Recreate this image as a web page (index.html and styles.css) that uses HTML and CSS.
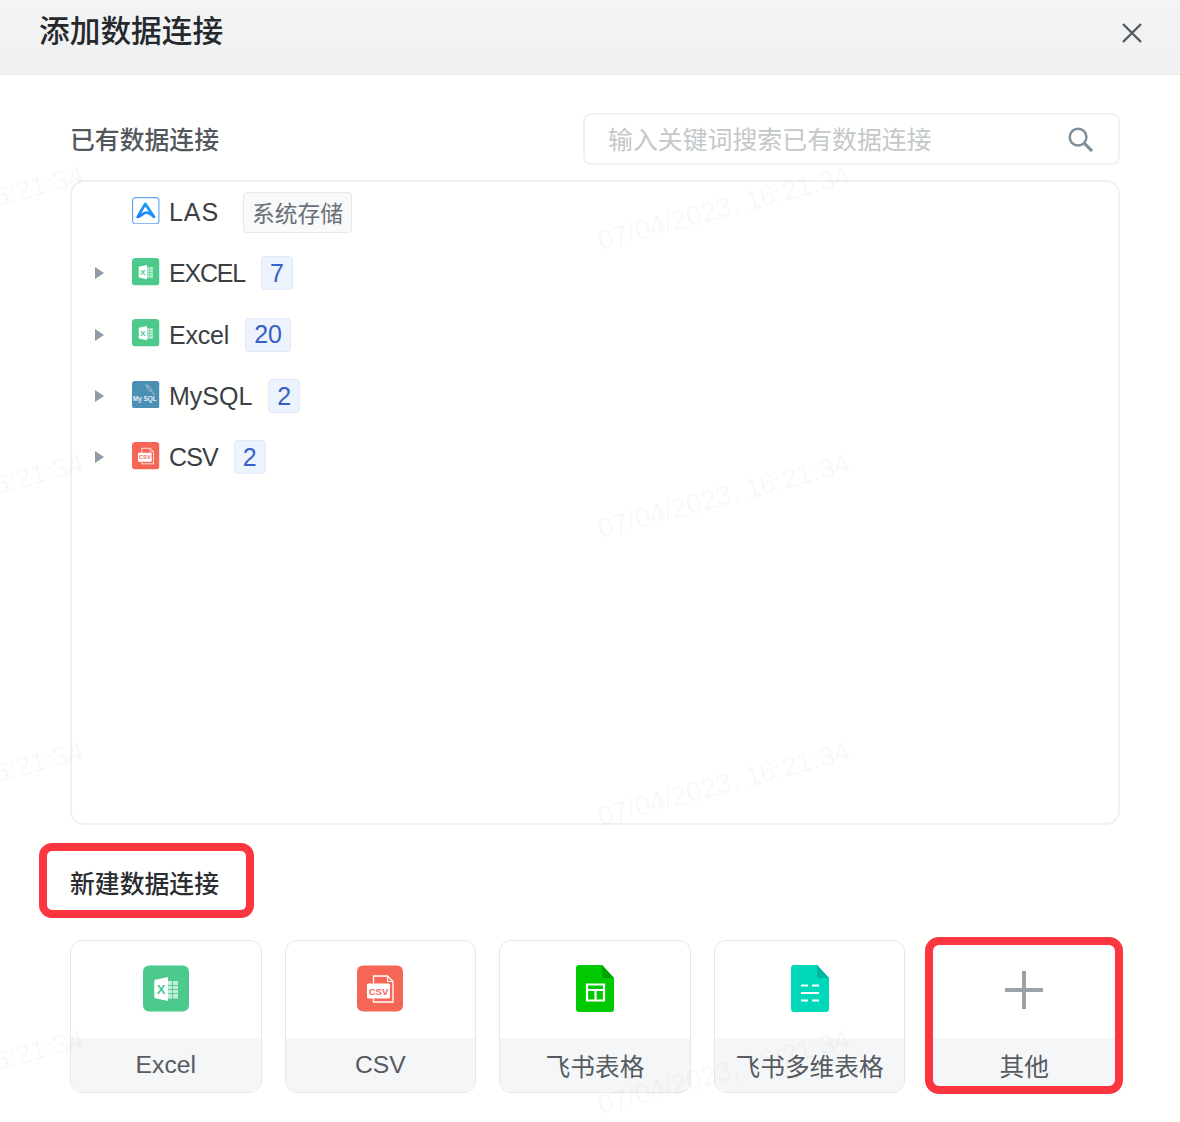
FILE: index.html
```html
<!DOCTYPE html>
<html lang="zh-CN">
<head>
<meta charset="utf-8">
<title>添加数据连接</title>
<link rel="stylesheet" href="styles.css">
</head>
<body>
<svg class="defs" width="0" height="0" aria-hidden="true">
  <defs>
    <linearGradient id="las-grad" x1="0" y1="1" x2="1" y2="0">
      <stop offset="0" stop-color="#1f7cf5"/>
      <stop offset="1" stop-color="#19a4f7"/>
    </linearGradient>
    <symbol id="i-excel" viewBox="0 0 46 46">
      <rect width="46" height="46" rx="6" fill="#4bca8c"/>
      <path d="M25 15.500h10v17.500h-10z" fill="#c2eed8"/>
      <path d="M25 20h10M25 24h10M25 28h10M29.500 15.500v17.500" stroke="#4bca8c" stroke-width=".9"/>
      <path d="M11.300 14.500 25 11.500v24l-13.700-3z" fill="#fff"/>
      <text x="18.200" y="28" class="i-x">X</text>
    </symbol>
    <symbol id="i-csv" viewBox="0 0 46 46">
      <rect width="46" height="46" rx="6" fill="#f66657"/>
      <path d="M16.500 18v-7.500h14l5.500 5.500v20.500h-19.500v-3.500" fill="none" stroke="#fff" stroke-width="1.300"/>
      <path d="M30.500 10.500v5.500h5.500" fill="none" stroke="#fff" stroke-width="1.100"/>
      <rect x="10" y="18" width="23" height="15" rx="1.500" fill="#fff"/>
      <text x="21.500" y="29" class="i-csv-t">CSV</text>
    </symbol>
    <symbol id="i-mysql" viewBox="0 0 28 28">
      <rect width="28" height="28" rx="3" fill="#4b8fb5"/>
      <path d="M14 4c3 .5 5 3 6 6l2.500 4M15 4.500c.5 3 2 5 3.500 6.500" fill="none" stroke="#d4e5ef" stroke-width=".7"/>
      <text x="13" y="20.500" class="i-my">My SQL</text>
    </symbol>
    <symbol id="i-sheet" viewBox="0 0 38 47">
      <path d="M3 0h23l12 13v31a3 3 0 0 1-3 3H3a3 3 0 0 1-3-3V3a3 3 0 0 1 3-3z" fill="#00c900"/>
      <path d="M26 0l12 13h-9a3 3 0 0 1-3-3z" fill="#00a300"/>
      <path d="M11 19.500h17v16h-17zM11 25h17M19.500 25v10.500" fill="none" stroke="#fff" stroke-width="2.200"/>
    </symbol>
    <symbol id="i-base" viewBox="0 0 38 47">
      <path d="M3 0h23l12 13v31a3 3 0 0 1-3 3H3a3 3 0 0 1-3-3V3a3 3 0 0 1 3-3z" fill="#00d8ba"/>
      <path d="M26 0l12 13h-9a3 3 0 0 1-3-3z" fill="#00b59c"/>
      <path d="M10 20.500h7M21 20.500h7M10 28h18M10 35.500h7M21 35.500h7" fill="none" stroke="#fff" stroke-width="2"/>
    </symbol>
  </defs>
</svg>

<header class="head">
  <h1 class="head-title">添加数据连接</h1>
  <button class="head-close" type="button" aria-label="关闭">
    <svg viewBox="0 0 20 20" width="20" height="20"><path d="M1 1l18 18M19 1 1 19" fill="none" stroke="#56595d" stroke-width="2.400"/></svg>
  </button>
</header>

<main class="body">
  <div class="bar">
    <h2 class="sec-title">已有数据连接</h2>
    <label class="search">
      <input class="search-input" type="text" placeholder="输入关键词搜索已有数据连接">
      <svg class="search-icon" viewBox="0 0 26 26" width="25" height="25"><circle cx="10.500" cy="10.500" r="8.700" fill="none" stroke="#7d8f9b" stroke-width="2.600"/><path d="M17 17l8 8" stroke="#7d8f9b" stroke-width="3.200"/></svg>
    </label>
  </div>

  <ul class="tree">
    <li class="row">
      <span class="caret-slot"></span>
      <svg class="row-icon" viewBox="0 0 28 28"><rect x=".6" y=".6" width="26.800" height="26.800" rx="3" fill="#fff" stroke="#67a5f8" stroke-width="1.200"/><path d="M5.800 20.200 13.500 7l9 13.300c-3-2.800-6-5-9-4.300-2.500.8-4.500 4-7.700 4.200z" fill="none" stroke="url(#las-grad)" stroke-width="2.800" stroke-linejoin="round"/></svg>
      <span class="row-name name-wide">LAS</span>
      <span class="tag tag-sys">系统存储</span>
    </li>
    <li class="row">
      <span class="caret-slot"><i class="caret"></i></span>
      <svg class="row-icon"><use href="#i-excel"/></svg>
      <span class="row-name name-tight">EXCEL</span>
      <span class="tag">7</span>
    </li>
    <li class="row">
      <span class="caret-slot"><i class="caret"></i></span>
      <svg class="row-icon"><use href="#i-excel"/></svg>
      <span class="row-name name-fine">Excel</span>
      <span class="tag">20</span>
    </li>
    <li class="row">
      <span class="caret-slot"><i class="caret"></i></span>
      <svg class="row-icon"><use href="#i-mysql"/></svg>
      <span class="row-name">MySQL</span>
      <span class="tag">2</span>
    </li>
    <li class="row">
      <span class="caret-slot"><i class="caret"></i></span>
      <svg class="row-icon"><use href="#i-csv"/></svg>
      <span class="row-name name-snug">CSV</span>
      <span class="tag">2</span>
    </li>
  </ul>

  <h2 class="sec-title sec-new">新建数据连接<span class="mark mark-title"></span></h2>

  <div class="cards">
    <div class="card">
      <div class="card-top"><svg class="card-icon-square"><use href="#i-excel"/></svg></div>
      <div class="card-foot">Excel</div>
    </div>
    <div class="card">
      <div class="card-top"><svg class="card-icon-square"><use href="#i-csv"/></svg></div>
      <div class="card-foot">CSV</div>
    </div>
    <div class="card">
      <div class="card-top"><svg class="card-icon-doc"><use href="#i-sheet"/></svg></div>
      <div class="card-foot">飞书表格</div>
    </div>
    <div class="card">
      <div class="card-top"><svg class="card-icon-doc"><use href="#i-base"/></svg></div>
      <div class="card-foot">飞书多维表格</div>
    </div>
    <div class="card card-other">
      <div class="card-top"><svg class="card-plus" viewBox="0 0 38 38"><path d="M19 0v38M0 19h38" fill="none" stroke="#98a3ab" stroke-width="4"/></svg></div>
      <div class="card-foot">其他</div>
      <span class="mark mark-card"></span>
    </div>
  </div>
</main>

<div class="wm-layer" aria-hidden="true">
  <span class="wm">07/04/2023, 16:21:34</span><span class="wm">07/04/2023, 16:21:34</span>
  <span class="wm">07/04/2023, 16:21:34</span><span class="wm">07/04/2023, 16:21:34</span>
  <span class="wm">07/04/2023, 16:21:34</span><span class="wm">07/04/2023, 16:21:34</span>
  <span class="wm">07/04/2023, 16:21:34</span><span class="wm">07/04/2023, 16:21:34</span>
</div>
</body>
</html>
```

FILE: styles.css
```css
* { box-sizing: border-box; }
html, body { height: 1122px; margin: 0; overflow: hidden; }
body {
  position: relative;
  background: #fffffe;
  color: #1f2329;
  font-family: "Liberation Sans", "Noto Sans CJK SC", sans-serif;
}
.defs { position: absolute; }

.head {
  height: 75px;
  display: flex;
  align-items: center;
  justify-content: space-between;
  padding: 0 38px 10px 39px;
  background: linear-gradient(#f3f4f4, #eff0f2);
  border-bottom: 1px solid #e8e9eb;
}
.head-title { margin: 0; font-size: 30.700px; font-weight: 500; line-height: 44px; color: #25282c; }
.head-close { width: 20px; height: 20px; padding: 0; border: 0; background: none; display: block; margin-top: 2px; }
.head-close svg { display: block; }

.body { padding: 38px 60px 0 70px; }
.bar { display: flex; align-items: center; justify-content: space-between; height: 52px; }
.sec-title { margin: 0; padding-top: 4px; font-size: 24.850px; font-weight: 500; line-height: 36px; color: #53585e; }

.search {
  width: 537px;
  height: 52px;
  display: flex;
  align-items: center;
  padding: 0 25px 0 23px;
  border: 2px solid #f0f1f2;
  border-radius: 8px;
}
.search-input {
  flex: 1;
  min-width: 0;
  border: 0;
  outline: 0;
  padding: 3px 0 0;
  background: none;
  font: inherit;
  font-size: 24.900px;
}
.search-input::placeholder { color: #c4c8cb; opacity: 1; }
.search-icon { flex: none; }

.tree {
  list-style: none;
  margin: 15px 0 0;
  padding: 0;
  height: 645px;
  border: 2px solid #f0f1f2;
  border-radius: 14px;
}
.row { display: flex; align-items: center; height: 61.300px; padding-bottom: 1px; font-size: 25px; color: #3b3f44; }
.caret-slot { flex: none; width: 60px; padding-left: 23px; display: flex; align-items: center; }
.caret {
  display: block;
  width: 0;
  height: 0;
  border-style: solid;
  border-width: 6px 0 6px 9px;
  border-color: transparent transparent transparent #8f9ba6;
}
.row-icon { flex: none; width: 27.500px; height: 27.500px; margin: 0 9.500px 3px 0; }
.row-name { line-height: 36px; }
.name-tight { letter-spacing: -1.200px; }
.name-snug { letter-spacing: -.9px; }
.name-fine { letter-spacing: -.2px; }
.name-wide { letter-spacing: .9px; }
.tag {
  margin-left: 16px;
  height: 34px;
  padding: 0 8px;
  display: flex;
  align-items: center;
  border: 1px solid #e1e9fa;
  border-radius: 4px;
  background: #edf3fd;
  color: #3760c6;
}
.tag-sys {
  margin-left: 24px;
  height: 41px;
  font-size: 22.800px;
  border-color: #e6e8ea;
  background: #f8f9fa;
  color: #6b7077;
}

.sec-new { position: relative; margin-top: 38px; color: #2a2d31; width: 150px; white-space: nowrap; }
.mark {
  position: absolute;
  border: 8px solid #fb3640;
  pointer-events: none;
}
.mark-title { left: -31px; top: -20px; width: 215px; height: 75px; border-radius: 13px; }

.cards {
  margin-top: 37px;
  display: grid;
  grid-template-columns: repeat(5, 1fr);
  gap: 23px;
}
.card {
  position: relative;
  height: 153px;
  display: flex;
  flex-direction: column;
  border: 1px solid #e5e7ea;
  border-radius: 12px;
  background: #fff;
}
.card-top { flex: 1; display: flex; justify-content: center; padding-top: 24px; }
.card-foot {
  height: 54px;
  display: flex;
  align-items: center;
  justify-content: center;
  border-radius: 0 0 11px 11px;
  background: #f5f6f8;
  font-size: 24.700px;
  color: #565b61;
}
.card-icon-square { width: 46px; height: 47px; }
.card-icon-doc { width: 38px; height: 47px; }
.card-plus { width: 38px; height: 38px; margin-top: 6px; }
.mark-card { left: -4px; right: -4px; top: -4px; bottom: -2px; border-radius: 14px; }

.i-x { font: 700 13px "Liberation Sans", sans-serif; fill: #4bca8c; text-anchor: middle; }
.i-csv-t { font: 700 9.500px "Liberation Sans", sans-serif; fill: #f66657; text-anchor: middle; }
.i-my { font: 700 6.500px "Liberation Sans", sans-serif; fill: #e6f0f6; text-anchor: middle; }

.wm-layer {
  position: absolute;
  inset: 0;
  overflow: hidden;
  pointer-events: none;
  display: grid;
  grid-template-columns: 766px 766px;
  grid-auto-rows: 288px;
  padding-top: 192px;
  margin-left: -172px;
  width: 1700px;
}
.wm {
  display: block;
  width: 260px;
  height: 32px;
  font-size: 27.400px;
  line-height: 32px;
  white-space: nowrap;
  color: rgba(30, 40, 50, .045);
  transform: rotate(-15deg);
  transform-origin: center;
}
```
